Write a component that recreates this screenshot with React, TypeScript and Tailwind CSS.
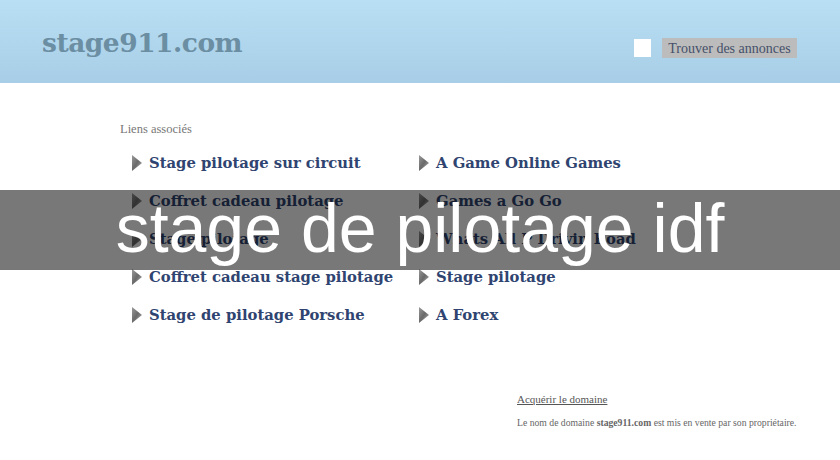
import React from "react";

const leftLinks = [
  "Stage pilotage sur circuit",
  "Coffret cadeau pilotage",
  "Stage pilotage",
  "Coffret cadeau stage pilotage",
  "Stage de pilotage Porsche",
];

const rightLinks = [
  "A Game Online Games",
  "Games a Go Go",
  "Whats All P Drivin Road",
  "Stage pilotage",
  "A Forex",
];

const Arrow = () => (
  <svg width="10" height="16" viewBox="0 0 10 16" className="shrink-0">
    <defs>
      <linearGradient id="arr" x1="0" y1="0" x2="1" y2="1">
        <stop offset="0" stopColor="#9a9a9a" />
        <stop offset="0.5" stopColor="#6a6a6a" />
        <stop offset="1" stopColor="#b5b5b5" />
      </linearGradient>
    </defs>
    <polygon points="0,0 10,8 0,16" fill="url(#arr)" />
  </svg>
);

function LinkColumn({ links }: { links: string[] }) {
  return (
    <ul className="flex flex-col gap-[15px]">
      {links.map((l, i) => (
        <li key={i} className="flex items-center gap-[7px] h-[23px]">
          <Arrow />
          <span className="font-['DejaVu_Serif',serif] text-[14.8px] font-bold text-[#2f4470] whitespace-nowrap">{l}</span>
        </li>
      ))}
    </ul>
  );
}

export default function App() {
  return (
    <div className="relative w-[840px] h-[460px] overflow-hidden bg-white font-['Liberation_Serif',serif]">
      {/* header */}
      <div className="h-[83px] bg-gradient-to-b from-[#b9dff4] to-[#a8cee7] flex items-start justify-between pl-[42px] pr-[43px]">
        <div className="pt-[23px] font-['DejaVu_Serif',serif] text-[26.5px] font-semibold text-[#6b8ea3] tracking-[-0.5px]">stage911.com</div>
        <div className="pt-[38px] flex items-center gap-[11px]">
          <div className="w-[17px] h-[18px] bg-white" />
          <div className="bg-[#bcbcbc] w-[135px] h-[20px] flex items-center justify-center text-[14px] text-[#45506a] whitespace-nowrap">
            Trouver des annonces
          </div>
        </div>
      </div>

      {/* related links */}
      <div className="pl-[120px] pt-[37px]">
        <div className="text-[12.5px] text-[#777]">Liens associés</div>
        <div className="flex pl-[12px] pt-[13px]">
          <div className="w-[287px]">
            <LinkColumn links={leftLinks} />
          </div>
          <LinkColumn links={rightLinks} />
        </div>
      </div>

      {/* domain sale */}
      <div className="pl-[517px] pt-[64px] text-[#555]">
        <div className="text-[11px] underline">Acquérir le domaine</div>
        <div className="pt-[9px] text-[9.7px] text-[#666]">
          Le nom de domaine <span className="font-bold">stage911.com</span> est mis en vente par son propriétaire.
        </div>
      </div>

      {/* overlay band */}
      <div className="absolute left-0 right-0 top-[190px] h-[80px] bg-black/[0.53] flex items-center justify-center">
        <span className="font-['Liberation_Sans',Arial,sans-serif] text-[68px] leading-none text-white pb-[4px]">
          stage de pilotage idf
        </span>
      </div>
    </div>
  );
}
